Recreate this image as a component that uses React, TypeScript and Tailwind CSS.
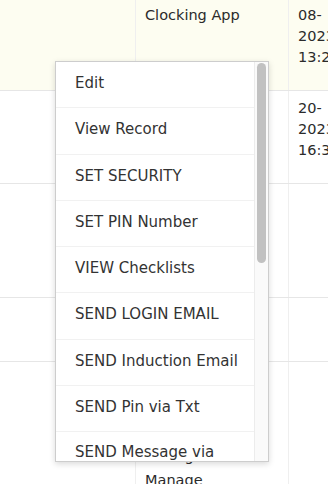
const MENU_ITEMS = [
  "Edit",
  "View Record",
  "SET SECURITY",
  "SET PIN Number",
  "VIEW Checklists",
  "SEND LOGIN EMAIL",
  "SEND Induction Email",
  "SEND Pin via Txt",
];

function Cell({ className, lines }: { className: string; lines?: string[] }) {
  return (
    <div className={className}>
      {lines?.map((line, i) => (
        <div key={i} className="whitespace-nowrap">
          {line}
        </div>
      ))}
    </div>
  );
}

function ActionMenu() {
  return (
    <div className="absolute left-[55px] top-[61px] flex h-[401px] w-[214px] overflow-hidden border border-[#cdcdcd] bg-white text-[15px] shadow-[0_2px_6px_rgba(0,0,0,0.15)]">
      <ul className="flex-1 overflow-hidden">
        {MENU_ITEMS.map((item) => (
          <li
            key={item}
            className="border-b border-[#f1f1f1] pb-[13.3px] pl-[19px] pt-[11px] leading-[21px] text-[#333]"
          >
            {item}
          </li>
        ))}
        <li className="pb-[10px] pl-[19px] pt-[10px] leading-[21px] text-[#333]">
          SEND Message via
          <br />
          Txt
        </li>
      </ul>
      <div className="w-[14px] shrink-0 border-l border-[#ececec] bg-[#fafafa] px-[2px] pt-[1px]">
        <div className="h-[200px] rounded-full bg-[#c1c1c1]" />
      </div>
    </div>
  );
}

export default function App() {
  return (
    <div className="relative h-[484px] w-[328px] overflow-hidden bg-white font-['DejaVu_Sans',sans-serif] text-[14.5px] leading-[21px] text-[#2b2b2b]">
      <div className="flex h-[91px] border-b border-[#e6e6e6] bg-[#fdfdf1]">
        <Cell className="w-[136px] shrink-0 border-r border-[#efefef]" />
        <Cell
          className="w-[153px] shrink-0 border-r border-[#efefef] pl-[9px] pt-[5px]"
          lines={["Clocking App"]}
        />
        <Cell
          className="w-[80px] shrink-0 pl-[9px] pt-[5px]"
          lines={["08-", "2023", "13:25"]}
        />
      </div>
      <div className="flex h-[93px] border-b border-[#e6e6e6]">
        <Cell className="w-[136px] shrink-0 border-r border-[#efefef]" />
        <Cell className="w-[153px] shrink-0 border-r border-[#efefef]" />
        <Cell
          className="w-[80px] shrink-0 pl-[9px] pt-[7px]"
          lines={["20-", "2023", "16:34"]}
        />
      </div>
      <div className="flex h-[114px] border-b border-[#e6e6e6]">
        <Cell className="w-[136px] shrink-0 border-r border-[#efefef]" />
        <Cell className="w-[153px] shrink-0 border-r border-[#efefef]" />
        <Cell className="w-[80px] shrink-0" />
      </div>
      <div className="flex h-[64px] border-b border-[#e6e6e6]">
        <Cell className="w-[136px] shrink-0 border-r border-[#efefef]" />
        <Cell className="w-[153px] shrink-0 border-r border-[#efefef]" />
        <Cell className="w-[80px] shrink-0" />
      </div>
      <div className="flex h-[140px]">
        <Cell className="w-[136px] shrink-0 border-r border-[#efefef]" />
        <Cell
          className="w-[153px] shrink-0 border-r border-[#efefef] pl-[9px] pt-[82px] leading-[24px]"
          lines={["Manage", "Manage"]}
        />
        <Cell className="w-[80px] shrink-0" />
      </div>
      <ActionMenu />
    </div>
  );
}
